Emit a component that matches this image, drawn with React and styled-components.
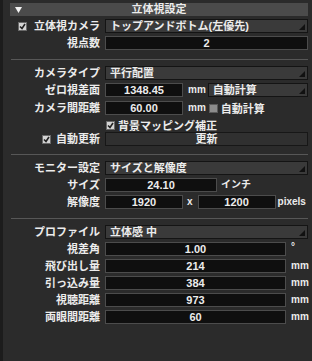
import React from 'react';
import styled, { createGlobalStyle } from 'styled-components';

const GlobalStyle = createGlobalStyle`
  body {
    margin: 0;
    background: #2b2b2b;
  }
`;

const Panel = styled.div`
  width: 312px;
  height: 361px;
  box-sizing: border-box;
  background: #2b2b2b;
  border-left: 3px solid #1c1c1c;
  padding: 3px 4px 0 7px;
  font-family: "Liberation Sans", "Noto Sans CJK JP", sans-serif;
  font-weight: bold;
  font-size: 11px;
  color: #ececec;
`;

const Header = styled.div`
  height: 13px;
  background: #4b4b4b;
  display: grid;
  grid-template-columns: 1fr auto 1fr;
  align-items: center;
  line-height: 13px;
`;

const HeaderArrow = styled.div`
  display: flex;
  align-items: center;
  padding-left: 5px;
`;

const Section = styled.div`
  display: flex;
  flex-direction: column;
  gap: 3px;
  padding: ${(p) => (p.$first ? '3px' : '6px')} 0 ${(p) => p.$bottom || '9px'} 0;
  border-bottom: ${(p) => (p.$last ? 'none' : '1px solid #575757')};
  margin-left: 1px;
`;

const Row = styled.div`
  display: grid;
  grid-template-columns: 89px 1fr;
  column-gap: 5px;
  height: ${(p) => p.$h || 14}px;
  align-items: center;
`;

const Label = styled.div`
  display: flex;
  justify-content: flex-end;
  align-items: center;
  gap: ${(p) => p.$gap || 4}px;
  white-space: nowrap;
  line-height: 14px;
`;

const Field = styled.div`
  display: flex;
  align-items: center;
  height: 100%;
`;

const Select = styled.div`
  flex: 1;
  height: 14px;
  box-sizing: border-box;
  background: #3a3a3a;
  border: 1px solid #141414;
  display: flex;
  justify-content: space-between;
  align-items: flex-end;
  padding-left: 4px;
  line-height: 12px;
  white-space: nowrap;
  overflow: hidden;
  span {
    align-self: center;
  }
  svg {
    margin: 0 2px 2px 0;
  }
`;

const Input = styled.div`
  width: ${(p) => (p.$w ? `${p.$w}px` : 'auto')};
  flex: ${(p) => (p.$w ? 'none' : 1)};
  height: 14px;
  box-sizing: border-box;
  background: #0f0f0f;
  border: 1px solid #4c4c4c;
  text-align: center;
  line-height: 12px;
`;

const Button = styled.div`
  flex: 1;
  height: 14px;
  box-sizing: border-box;
  background: #303030;
  border: 1px solid #171717;
  text-align: center;
  line-height: 12px;
`;

const Unit = styled.span`
  font-size: 10px;
  margin-left: ${(p) => p.$ml || 0}px;
  margin-right: ${(p) => p.$mr || 0}px;
  align-self: ${(p) => (p.$top ? 'flex-start' : 'center')};
  line-height: ${(p) => (p.$top ? '10px' : '14px')};
`;

const Box = styled.span`
  width: 9px;
  height: 9px;
  box-sizing: border-box;
  flex: none;
  display: inline-flex;
  align-items: center;
  justify-content: center;
  background: ${(p) => (p.$on ? '#d4d4d4' : '#8c8c8c')};
  border: 1px solid ${(p) => (p.$on ? '#6a6a6a' : '#5a5a5a')};
`;

const CheckText = styled.div`
  display: flex;
  align-items: center;
  gap: 3px;
  margin-left: ${(p) => p.$ml || 0}px;
  white-space: nowrap;
`;

const Arrow = () => (
  <svg width="6" height="6" viewBox="0 0 6 6">
    <polygon points="6,0 6,6 0,6" fill="#111" />
  </svg>
);

const Check = ({ on }) => (
  <Box $on={on}>
    {on && (
      <svg width="7" height="7" viewBox="0 0 7 7">
        <polyline points="1,3.5 3,5.5 6,1" fill="none" stroke="#222" strokeWidth="1.6" />
      </svg>
    )}
  </Box>
);

const App = () => {
  return (
    <Panel>
      <GlobalStyle />
      <Header>
        <HeaderArrow>
          <svg width="7" height="6" viewBox="0 0 7 6">
            <polygon points="0,0 7,0 3.5,6" fill="#f2f2f2" />
          </svg>
        </HeaderArrow>
        <span>立体視設定</span>
        <span />
      </Header>

      <Section $first>
        <Row>
          <Label $gap={7}><Check on />立体視カメラ</Label>
          <Field><Select><span>トップアンドボトム(左優先)</span><Arrow /></Select></Field>
        </Row>
        <Row>
          <Label>視点数</Label>
          <Field><Input>2</Input></Field>
        </Row>
      </Section>

      <Section $bottom="8px">
        <Row>
          <Label>カメラタイプ</Label>
          <Field><Select><span>平行配置</span><Arrow /></Select></Field>
        </Row>
        <Row>
          <Label>ゼロ視差面</Label>
          <Field>
            <Input $w={78}>1348.45</Input>
            <Unit $ml={5} $mr={2}>mm</Unit>
            <Select><span>自動計算</span><Arrow /></Select>
          </Field>
        </Row>
        <Row>
          <Label>カメラ間距離</Label>
          <Field>
            <Input $w={78}>60.00</Input>
            <Unit $ml={5} $mr={3}>mm</Unit>
            <CheckText><Check />自動計算</CheckText>
          </Field>
        </Row>
        <Row $h={12}>
          <span />
          <Field><CheckText $ml={1}><Check on />背景マッピング補正</CheckText></Field>
        </Row>
        <Row>
          <Label $gap={5}><Check on />自動更新</Label>
          <Field><Button>更新</Button></Field>
        </Row>
      </Section>

      <Section>
        <Row>
          <Label>モニター設定</Label>
          <Field><Select><span>サイズと解像度</span><Arrow /></Select></Field>
        </Row>
        <Row>
          <Label>サイズ</Label>
          <Field>
            <Input $w={112}>24.10</Input>
            <Unit $ml={4}>インチ</Unit>
          </Field>
        </Row>
        <Row>
          <Label>解像度</Label>
          <Field>
            <Input $w={78}>1920</Input>
            <Unit $ml={4} $mr={5}>x</Unit>
            <Input $w={78}>1200</Input>
            <Unit $ml={2}>pixels</Unit>
          </Field>
        </Row>
      </Section>

      <Section $last>
        <Row>
          <Label>プロファイル</Label>
          <Field><Select><span>立体感 中</span><Arrow /></Select></Field>
        </Row>
        <Row>
          <Label>視差角</Label>
          <Field><Input $w={181}>1.00</Input><Unit $ml={5} $top>°</Unit></Field>
        </Row>
        <Row>
          <Label>飛び出し量</Label>
          <Field><Input $w={181}>214</Input><Unit $ml={5}>mm</Unit></Field>
        </Row>
        <Row>
          <Label>引っ込み量</Label>
          <Field><Input $w={181}>384</Input><Unit $ml={5}>mm</Unit></Field>
        </Row>
        <Row>
          <Label>視聴距離</Label>
          <Field><Input $w={181}>973</Input><Unit $ml={5}>mm</Unit></Field>
        </Row>
        <Row>
          <Label>両眼間距離</Label>
          <Field><Input $w={181}>60</Input><Unit $ml={5}>mm</Unit></Field>
        </Row>
      </Section>
    </Panel>
  );
};

export default App;
